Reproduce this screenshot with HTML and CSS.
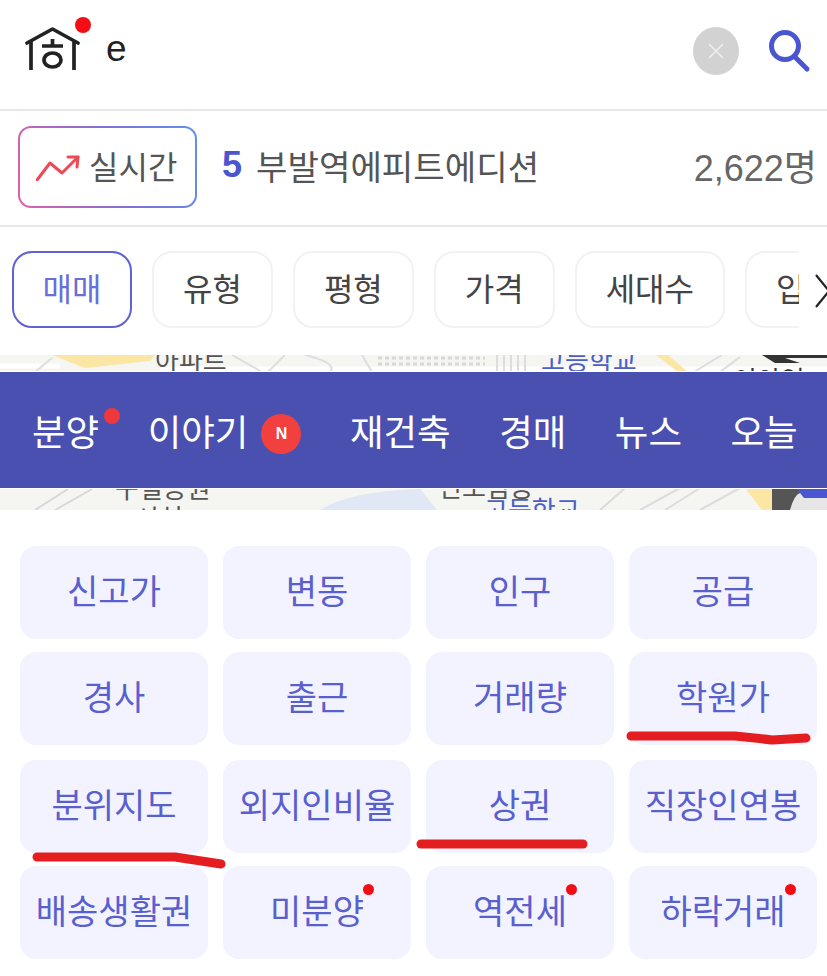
FILE: index.html
```html
<!DOCTYPE html>
<html lang="ko">
<head>
    <meta charset="UTF-8">
    <meta name="viewport" content="width=device-width, initial-scale=1.0">
    <title>실시간 검색</title>
    <link rel="stylesheet" href="styles.css">
</head>
<body>

    <div class="search-bar">
        <div class="logo">
            <svg width="55" height="46" viewBox="0 0 55 46" fill="none" stroke="#222" stroke-width="3.7">
                <path d="M2 17 L27.5 3 L53 17" stroke-linecap="round" stroke-linejoin="round"/>
                <path d="M6 15 V44 M49 15 V44"/>
                <path d="M17 20 H38 M27.5 13 V20"/>
                <ellipse cx="27.5" cy="34" rx="8.5" ry="7"/>
            </svg>
            <span class="logo-dot"></span>
        </div>
        <div class="search-text">e</div>
        <div class="clear-btn">
            <svg width="18" height="18" viewBox="0 0 18 18" stroke="#eee" stroke-width="1.6">
                <path d="M2 2 L16 16 M16 2 L2 16"/>
            </svg>
        </div>
        <svg class="search-icon" width="44" height="44" viewBox="0 0 44 44" fill="none" stroke="#4a55d0" stroke-width="5" stroke-linecap="round">
            <circle cx="17" cy="17" r="13.5"/>
            <path d="M27 28 L39 40"/>
        </svg>
    </div>

    <div class="ticker">
        <div class="live-box">
            <svg width="44" height="28" viewBox="0 0 44 28" fill="none" stroke="#ee4a55" stroke-width="3" stroke-linecap="round" stroke-linejoin="round">
                <path d="M1 27 L14 10 L26 20 L42 4"/>
                <path d="M32 4 H42 L41 14"/>
            </svg>
            <span class="live-text">실시간</span>
        </div>
        <div class="rank">5</div>
        <div class="rank-name">부발역에피트에디션</div>
        <div class="rank-count">2,622명</div>
    </div>

    <div class="filters">
        <div class="filter-list">
            <div class="filter active">매매</div>
            <div class="filter">유형</div>
            <div class="filter">평형</div>
            <div class="filter">가격</div>
            <div class="filter">세대수</div>
            <div class="filter">입주</div>
        </div>
        <svg class="filter-next" width="14" height="34" viewBox="0 0 14 34" fill="none" stroke="#222" stroke-width="2.2">
            <path d="M1 1 L14 17 L1 33"/>
        </svg>
    </div>

    <div class="map-strip">
        <svg class="map-bg" width="827" height="155" viewBox="0 0 827 155" fill="none">
            <path d="M0 11 H60 M160 14 H827" stroke="#fff" stroke-width="5"/>
            <path d="M52 0 L85 13 L150 6 L155 0 Z" fill="#fbe6a4"/>
            <path d="M35 17 L52 3 M232 0 L262 17 M285 0 L268 17 M305 0 Q338 8 330 17 M362 0 L372 17" stroke="#dedede" stroke-width="2"/>
            <path d="M378 3 H485 M378 9 H485" stroke="#d8d8d8" stroke-width="3" stroke-dasharray="4 3"/>
            <path d="M497 0 V17 M504 0 V17 M511 0 V17 M518 0 V17 M525 0 V17" stroke="#ddd" stroke-width="2"/>
            <path d="M656 0 L678 17 L688 17 L668 0 Z" fill="#fbe6a4"/>
            <path d="M694 17 L722 0 M720 17 L740 2" stroke="#ddd" stroke-width="2"/>
            <path d="M762 0 L775 8 H800 L785 3 H827 V0 Z" fill="#333"/>
            <path d="M35 155 L68 134 M55 155 L92 134" stroke="#d8d8d8" stroke-width="2"/>
            <path d="M320 155 Q350 136 420 134 L437 155 Z" fill="#dfe8f4"/>
            <path d="M600 155 L625 133 M640 155 L680 133 M665 155 L700 133 M700 155 L740 133" stroke="#dcdcdc" stroke-width="2"/>
            <path d="M745 133 L762 155 L772 155 L772 133 Z" fill="#fbe6a4"/>
            <rect x="772" y="133" width="55" height="22" fill="#555"/>
            <path d="M790 155 Q794 140 800 138 H827 V155 Z" fill="#e6e6e6"/>
            <path d="M796 133 H827 V143 H804 Z" fill="#4a55d0"/>
        </svg>
        <div class="map-label map-apt">아파트</div>
        <div class="map-label map-school">고등학교</div>
        <div class="map-label map-station">이안역</div>
        <div class="map-label map-park">구일공원</div>
        <div class="map-label map-park2">시설</div>
        <div class="map-label map-town">신도림동</div>
        <div class="map-label map-school2">고등학교</div>

        <div class="nav-bar">
            <div class="nav-item">분양<span class="nav-dot"></span></div>
            <div class="nav-item">이야기<span class="nav-badge">N</span></div>
            <div class="nav-item">재건축</div>
            <div class="nav-item">경매</div>
            <div class="nav-item">뉴스</div>
            <div class="nav-item">오늘</div>
        </div>
    </div>

    <div class="tile-grid">
        <div class="tile">신고가</div>
        <div class="tile">변동</div>
        <div class="tile">인구</div>
        <div class="tile">공급</div>
        <div class="tile">경사</div>
        <div class="tile">출근</div>
        <div class="tile">거래량</div>
        <div class="tile">학원가</div>
    </div>

    <div class="tile-grid">
        <div class="tile">분위지도</div>
        <div class="tile">외지인비율</div>
        <div class="tile">상권</div>
        <div class="tile">직장인연봉</div>
        <div class="tile">배송생활권</div>
        <div class="tile"><span class="tile-label">미분양<i class="tile-dot"></i></span></div>
        <div class="tile"><span class="tile-label">역전세<i class="tile-dot"></i></span></div>
        <div class="tile"><span class="tile-label">하락거래<i class="tile-dot"></i></span></div>
    </div>

    <!-- red pen marks on top of the screenshot -->
    <svg class="pen-marks" width="827" height="976" viewBox="0 0 827 976" fill="none" stroke="#e41e20" stroke-width="9" stroke-linecap="round" stroke-linejoin="round">
        <path d="M631 736 H735 Q755 738 772 740 L806 738"/>
        <path d="M421 844 H583"/>
        <path d="M37 857 H175 Q195 860 221 864"/>
    </svg>

</body>
</html>
```

FILE: styles.css
```css
* {
    box-sizing: border-box;
}

body {
    position: relative;
    margin: 0;
    padding: 0;
    height: 976px;
    overflow: hidden;
    background-color: #ffffff;
    font-family: "Noto Sans CJK KR", "Noto Sans", sans-serif;
    color: #333;
}

.search-bar {
    display: flex;
    align-items: center;
    height: 111px;
    padding: 0 15px 8px 25px;
    border-bottom: 2px solid #e6e6e6;
}

.logo {
    position: relative;
    width: 55px;
    height: 46px;
    margin-top: -4px;
}

.logo-dot {
    position: absolute;
    top: -9px;
    left: 50px;
    width: 16px;
    height: 16px;
    border-radius: 50%;
    background-color: #f40d14;
}

.search-text {
    flex: 1;
    margin-left: 26px;
    padding-bottom: 3px;
    font-family: "Liberation Sans", sans-serif;
    font-size: 37px;
    color: #222;
}

.clear-btn {
    display: flex;
    align-items: center;
    justify-content: center;
    width: 46px;
    height: 48px;
    margin-right: 29px;
    border-radius: 50%;
    background-color: #d2d2d2;
}

.ticker {
    display: flex;
    align-items: center;
    height: 116px;
    padding: 0 10px 2px 18px;
    border-bottom: 2px solid #e6e6e6;
    font-size: 34.2px;
    color: #555;
}

.live-box {
    display: flex;
    align-items: center;
    gap: 9px;
    width: 179px;
    height: 82px;
    padding-left: 16px;
    border: 2px solid transparent;
    border-radius: 13px;
    background: linear-gradient(#fff, #fff) padding-box, linear-gradient(70deg, #e060a8, #8070d8 55%, #6090f0) border-box;
}

.live-text {
    padding-bottom: 5px;
    font-size: 32px;
}

.rank {
    margin-left: 25px;
    padding-bottom: 4px;
    font-family: "Liberation Sans", sans-serif;
    font-size: 36px;
    font-weight: 700;
    color: #4a55d0;
}

.rank-name {
    flex: 1;
    margin-left: 14px;
    padding-bottom: 4px;
}

.rank-count {
    padding-bottom: 4px;
    font-family: "Liberation Sans", "Noto Sans CJK KR", sans-serif;
    font-size: 36px;
    color: #666;
}

.filters {
    position: relative;
    height: 128px;
    padding: 24px 0 0 12px;
}

.filter-list {
    display: flex;
    gap: 20px;
    width: 787px;
    overflow: hidden;
}

.filter {
    flex-shrink: 0;
    height: 77px;
    padding: 0 29px;
    border: 2px solid #f2f2f2;
    border-radius: 20px;
    font-size: 32px;
    line-height: 69px;
    color: #444;
}

.filter.active {
    width: 120px;
    padding: 0;
    border-color: #5f62cf;
    text-align: center;
    color: #6a6ed8;
}

.filter-next {
    position: absolute;
    top: 47px;
    left: 815px;
}

.map-strip {
    position: relative;
    height: 155px;
    padding-top: 17px;
    overflow: hidden;
    background-color: #f5f5f2;
}

.map-bg {
    position: absolute;
    top: 0;
    left: 0;
}

.map-label {
    position: absolute;
    font-size: 26px;
    line-height: 22px;
    color: #555;
}

.map-apt {
    top: -7px;
    left: 155px;
}

.map-school {
    top: -7px;
    left: 541px;
    color: #4a60c8;
}

.map-station {
    top: 13px;
    left: 733px;
    color: #333;
}

.map-park {
    top: 121px;
    left: 115px;
}

.map-park2 {
    top: 151px;
    left: 135px;
}

.map-town {
    top: 120px;
    left: 438px;
}

.map-school2 {
    top: 143px;
    left: 484px;
    color: #4a60c8;
}

.nav-bar {
    position: relative;
    display: flex;
    align-items: center;
    gap: 48.5px;
    height: 116px;
    padding: 0 0 0 32px;
    overflow: hidden;
    background-color: #4a50b0;
    box-shadow: 0 0 0 1px #fff;
    font-size: 36.5px;
    color: #ffffff;
    white-space: nowrap;
}

.nav-item {
    display: flex;
    align-items: center;
    flex-shrink: 0;
    position: relative;
}

.nav-dot {
    position: absolute;
    top: 4px;
    right: -21px;
    width: 16px;
    height: 16px;
    border-radius: 50%;
    background-color: #f0383c;
}

.nav-badge {
    display: flex;
    align-items: center;
    justify-content: center;
    width: 40px;
    height: 40px;
    margin: 8px 0 0 13px;
    border-radius: 50%;
    background-color: #f2403f;
    font-family: "Liberation Sans", sans-serif;
    font-size: 16px;
    font-weight: 700;
}

.tile-grid {
    display: grid;
    grid-template-columns: repeat(4, 188px);
    grid-auto-rows: 93px;
    gap: 13px 15px;
    margin: 15px 0 0 20px;
}

.map-strip + .tile-grid {
    margin-top: 36px;
}

.tile {
    display: flex;
    align-items: center;
    justify-content: center;
    padding-bottom: 6px;
    border-radius: 16px;
    background-color: #f2f3fe;
    font-size: 34px;
    color: #5a5fd0;
}

.tile-label {
    position: relative;
}

.tile-dot {
    position: absolute;
    top: -1px;
    right: -10px;
    width: 11px;
    height: 11px;
    border-radius: 50%;
    background-color: #f20d12;
}

.pen-marks {
    position: absolute;
    top: 0;
    left: 0;
    pointer-events: none;
}
```
